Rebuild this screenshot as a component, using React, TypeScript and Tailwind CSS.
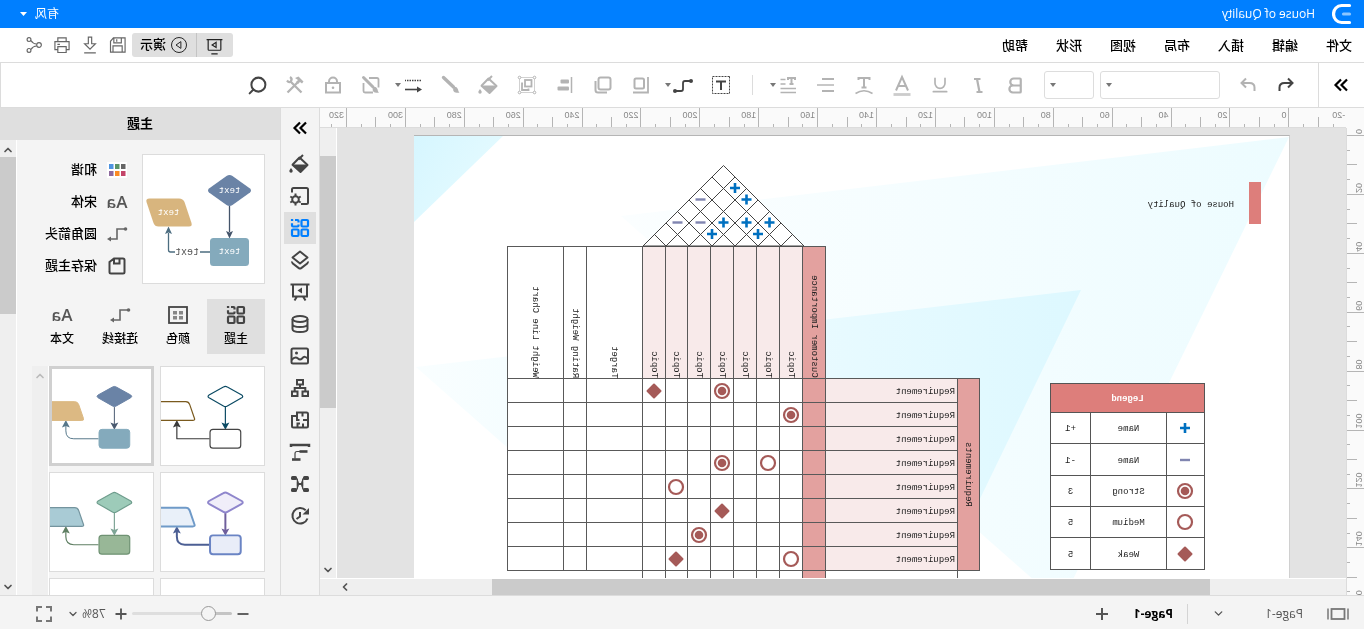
import React from "react";
import { Bold, ChevronDown, ChevronRight, ChevronUp, Search, Underline } from "lucide-react";

type IconProps = { children: React.ReactNode; w?: number; className?: string; size?: number };

function Icon({ children, w = 2, className = "", size = 24 }: IconProps) {
  return (
    <svg
      width={size}
      height={size}
      viewBox="0 0 24 24"
      fill="none"
      stroke="currentColor"
      strokeWidth={w}
      className={"shrink-0 " + className}
      aria-hidden="true"
    >
      {children}
    </svg>
  );
}

/* ---------- shared icons ---------- */

const Collapse = () => (
  <Icon w={2.2}>
    <path d="M6 6.500l5.500 5.500L6 17.500M12 6.500l5.500 5.500L12 17.500" />
  </Icon>
);

const Bucket = () => (
  <Icon w={2}>
    <path d="M12.500 5.500L4.500 13l7 7L19.500 12.800z" strokeLinejoin="round" />
    <path d="M4.500 12.500h15.500l-8.500 8z" fill="currentColor" stroke="none" />
    <path d="M9 3l4.500 4.500" />
    <path d="M21 16c1 1.300 1.700 2.200 1.700 3a1.700 1.700 0 0 1-3.400 0c0-.8.7-1.700 1.700-3z" fill="currentColor" stroke="none" />
  </Icon>
);

const ThemeGrid = () => (
  <Icon w={2.200}>
    <rect x="4" y="4" width="6.500" height="6.500" rx="1" />
    <path d="M13.500 8.500v1q0 1 1 1h4.500q1 0 1-1V7.200M13.500 6.500V5q0-1 1-1H17M18.800 4h2.300" />
    <rect x="4" y="13.500" width="6.500" height="6.500" rx="1" />
    <rect x="13.500" y="13.500" width="6.500" height="6.500" rx="1" />
  </Icon>
);

const FontSample = () => (
  <span aria-hidden="true" className="font-['Open_Sans'] text-[17px] font-semibold leading-6 text-[#555]">
    Aa
  </span>
);

const Elbow = () => (
  <Icon w={1.600} className="text-[#666]">
    <path d="M4 7h8v10h7" />
    <circle cx="3.500" cy="7" r="1.800" fill="currentColor" stroke="none" />
    <path d="M22 17l-4-2.500v5z" fill="currentColor" stroke="none" />
  </Icon>
);

/* ---------- title bar ---------- */

function TitleBar() {
  return (
    <header className="flex h-7 shrink-0 items-center bg-[#007fff] text-xs text-white">
      <svg width="20" height="22" viewBox="0 0 20 22" fill="none" className="ml-3" aria-hidden="true">
        <path d="M2.500 2.500h8a7.500 8 0 0 1 0 17h-8" stroke="#fff" strokeWidth="3.200" strokeLinecap="round" />
        <path d="M2.500 11h6" stroke="#8cc6ff" strokeWidth="3.200" strokeLinecap="round" />
      </svg>
      <h1 className="ml-[17px]">House of Quality</h1>
      <button className="ml-auto mr-5 flex items-center gap-2">
        有风
        <svg width="7" height="4" viewBox="0 0 7 4" aria-hidden="true">
          <path d="M0 0h7L3.500 4z" fill="#fff" />
        </svg>
      </button>
    </header>
  );
}

/* ---------- menu bar ---------- */

const menus = ["文件", "编辑", "插入", "布局", "视图", "形状", "帮助"];

function MenuBar() {
  return (
    <div className="flex h-[34px] shrink-0 items-center bg-white pl-3 pr-5 text-[13px] font-medium text-black">
      <nav className="flex gap-7 pt-[2px]">
        {menus.map((m) => (
          <button key={m}>{m}</button>
        ))}
      </nav>
      <div className="ml-auto flex items-center">
        <div className="flex h-6 rounded-[3px] bg-[#dfdfdf]">
          <button aria-label="放映" className="flex w-[37px] items-center justify-center border-r border-[#c4c4c4]">
            <Icon w={1.500} size={19} className="text-[#222]">
              <path d="M2 4.500h20M4 4.500v12.500q0 1 1 1h14q1 0 1-1V4.500M8 22.500h8" />
              <path d="M10 8v6.500l5-3.200z" />
            </Icon>
          </button>
          <button className="flex w-16 items-center justify-center gap-1">
            <Icon w={1.300} size={18} className="text-[#222]">
              <circle cx="12" cy="12" r="10" />
              <path d="M9.500 7.500v9l6.500-4.500z" />
            </Icon>
            演示
          </button>
        </div>
        <div className="flex text-[#666]">
          <button aria-label="保存" className="flex w-7 justify-center">
            <Icon w={1.400} size={20}>
              <path d="M3.500 3.500h14l3.500 4v13h-17.500zM8 3.500v6h9v-6M7 20.500v-7.500h11v7.500M13.500 5v3" />
            </Icon>
          </button>
          <button aria-label="下载" className="flex w-7 justify-center">
            <Icon w={1.400} size={20}>
              <path d="M10 2.500h4v8h4.500L12 17 5.500 10.500H10zM5 21.500h14" />
            </Icon>
          </button>
          <button aria-label="打印" className="flex w-7 justify-center">
            <Icon w={1.400} size={20}>
              <path d="M7 8V3.500h10V8M6.500 17.500H3.500V8h17v9.500h-3M7 14h10v7H7zM14.500 11.200h3" />
            </Icon>
          </button>
          <button aria-label="分享" className="flex w-7 justify-center">
            <Icon w={1.400} size={20}>
              <circle cx="6" cy="12" r="2.800" />
              <circle cx="18" cy="5.500" r="2.300" />
              <circle cx="18" cy="18.500" r="2.300" />
              <path d="M9 10.800q4 0 6.700-4.200M9 13.200q4 0 6.700 4.200" />
            </Icon>
          </button>
        </div>
      </div>
    </div>
  );
}

/* ---------- tool bar ---------- */

function Tool({ label, on, caret, children }: { label: string; on?: boolean; caret?: boolean; children: React.ReactNode }) {
  return (
    <button
      aria-label={label}
      className={
        "flex h-9 shrink-0 items-center pl-[7px] " +
        (caret ? "w-[42px] " : "w-[38px] ") +
        (on ? "text-[#444]" : "text-[#b3b3b3]")
      }
    >
      {children}
      {caret && (
        <svg width="6" height="4" viewBox="0 0 6 4" aria-hidden="true">
          <path d="M0 0h6L3 4z" fill="#777" />
        </svg>
      )}
    </button>
  );
}

function Combo({ label, wide }: { label: string; wide?: boolean }) {
  return (
    <div className={"relative shrink-0 " + (wide ? "w-[120px]" : "w-[50px]")}>
      <select aria-label={label} className="block h-7 w-full appearance-none rounded-[3px] border border-[#ddd] bg-white">
        <option></option>
      </select>
      <svg width="6" height="4" viewBox="0 0 6 4" className="pointer-events-none absolute right-[6px] top-3" aria-hidden="true">
        <path d="M0 0h6L3 4z" fill="#777" />
      </svg>
    </div>
  );
}

function ToolBar() {
  return (
    <div className="flex h-[46px] shrink-0 items-center border-y border-r border-[#dcdcdc] bg-white">
      <button aria-label="收起" className="flex h-full w-[46px] shrink-0 items-center justify-center border-r border-[#dcdcdc] text-black">
        <Collapse />
      </button>
      <div className="ml-[13px] mr-[9px] flex">
        <Tool label="撤销" on>
          <Icon>
            <path d="M10 5.500L5.500 10l4.500 4.500M6 10h7.500q5 0 5 4.500V18" />
          </Icon>
        </Tool>
        <Tool label="重做">
          <Icon>
            <path d="M14 5.500l4.500 4.500-4.500 4.500M18 10h-7.500q-5 0-5 4.500V18" />
          </Icon>
        </Tool>
      </div>
      <div className="mr-[9px] flex gap-[6px]">
        <Combo label="字体" wide />
        <Combo label="字号" />
      </div>
      <Tool label="加粗">
        <Bold size={21} strokeWidth={2.500} className="ml-[2px]" aria-hidden="true" />
      </Tool>
      <Tool label="斜体">
        <Icon w={2.200}>
          <path d="M9.500 6h6.500M7.500 19h6M13 6l-2.500 13" />
        </Icon>
      </Tool>
      <Tool label="下划线">
        <Underline size={20} className="ml-[2px]" aria-hidden="true" />
      </Tool>
      <Tool label="字体颜色">
        <Icon>
          <path d="M6 17.500L12 4l6 13.500M8 13h8" />
          <path d="M3.500 21.500h17" stroke="#ccc" strokeWidth="2.800" />
        </Icon>
      </Tool>
      <Tool label="弧形文字">
        <Icon>
          <path d="M6.500 7V5h11v2M12 5v9.500M9.500 14.500h5" />
          <path d="M3.500 20.500q8.500-5.500 17 0" strokeWidth="1.500" />
        </Icon>
      </Tool>
      <Tool label="对齐">
        <Icon>
          <path d="M4 6h12M4 18h12" />
          <path d="M4 12h17" stroke="#c8c8c8" />
        </Icon>
      </Tool>
      <Tool label="行距" caret>
        <Icon w={2}>
          <path d="M5 7V5h7v2M8.500 5v6M6.500 11h4" />
          <path d="M14.500 6.500H19.500M14.500 11H19.500M4 15.500h15.500M4 19.500h15.500" strokeWidth="1.600" />
        </Icon>
      </Tool>
      <div className="flex w-[25px] shrink-0 justify-center">
        <div className="h-5 w-px bg-[#dcdcdc]" />
      </div>
      <Tool label="文本框" on>
        <Icon>
          <rect x="3.500" y="3.500" width="17" height="17" strokeWidth="1" strokeDasharray="2 1" />
          <path d="M7 8.500h10M12 8.500v8.500" />
        </Icon>
      </Tool>
      <Tool label="连接线" on caret>
        <Icon w={1.800}>
          <path d="M4 8h6q2 0 2 2v6q0 2 2 2h6" />
          <circle cx="4" cy="8" r="2" fill="currentColor" stroke="none" />
          <circle cx="20" cy="18" r="2" fill="currentColor" stroke="none" />
        </Icon>
      </Tool>
      <Tool label="位置">
        <Icon>
          <rect x="9" y="5.500" width="9.500" height="10" rx="1.500" />
          <path d="M5 4v15.500h15" strokeWidth="1.800" />
        </Icon>
      </Tool>
      <Tool label="层次">
        <Icon>
          <rect x="4.500" y="4.500" width="12" height="12" rx="2" />
          <path d="M19.500 8v9q0 2.500-2.500 2.500H8" />
        </Icon>
      </Tool>
      <Tool label="排列">
        <Icon>
          <path d="M5.500 4v16" strokeWidth="1.500" />
          <rect x="8" y="6.500" width="8.500" height="4" rx="1" fill="currentColor" stroke="none" />
          <rect x="8" y="13.500" width="11.500" height="4" rx="1" fill="currentColor" stroke="none" />
        </Icon>
      </Tool>
      <Tool label="组合">
        <Icon w={1}>
          <path d="M6 4.500h12M6 19.500h12M4.500 6v12M19.500 6v12" strokeOpacity="0.6" />
          <circle cx="4.500" cy="4.500" r="1.300" fill="#fff" />
          <circle cx="19.500" cy="4.500" r="1.300" fill="#fff" />
          <circle cx="4.500" cy="19.500" r="1.300" fill="#fff" />
          <circle cx="19.500" cy="19.500" r="1.300" fill="#fff" />
          <rect x="7.500" y="7" width="6.500" height="6.500" strokeWidth="1.800" />
          <path d="M16 10.500h1v6.500h-6.500v-1.500" strokeWidth="1.800" />
        </Icon>
      </Tool>
      <Tool label="填充">
        <Bucket />
      </Tool>
      <Tool label="画笔">
        <Icon>
          <path d="M19.500 4.500L9.500 14" strokeWidth="3.400" strokeLinecap="round" />
          <path d="M9 14.500c1.500 1.500 1 4.500-1.500 5-1.500.3-3 .3-4 0 1.500-1 1-2.500 2-4 .8-1.300 2.500-1.800 3.500-1z" fill="currentColor" stroke="none" />
        </Icon>
      </Tool>
      <Tool label="线条样式" on caret>
        <Icon w={1.600}>
          <path d="M4 7.500h16" strokeDasharray="1.500 1" />
          <path d="M7 16.500h13" />
          <path d="M3 16.500l5-3v6z" fill="currentColor" stroke="none" />
        </Icon>
      </Tool>
      <Tool label="样式">
        <Icon w={1.800}>
          <path d="M14 5H6q-1.500 0-1.500 1.500v8M19.500 10v8q0 1.500-1.500 1.500h-8" />
          <path d="M19.500 4.500L10 14" strokeWidth="3" strokeLinecap="round" />
          <path d="M9.500 14.500c1.500 1.500 1 4.500-1.500 5-1.500.3-3 .3-4 0 1.500-1 1-2.500 2-4 .8-1.300 2.500-1.800 3.500-1z" fill="currentColor" stroke="none" />
        </Icon>
      </Tool>
      <Tool label="锁定">
        <Icon>
          <rect x="5" y="10" width="14" height="9.500" />
          <path d="M8 10V8.500a4 4 0 0 1 8 0v1.500" />
          <circle cx="12" cy="14.800" r="1.300" fill="currentColor" stroke="none" />
        </Icon>
      </Tool>
      <Tool label="工具">
        <Icon w={2.300}>
          <path d="M5.500 19.500L17 8M19.500 19.500l-10.500-10.500" />
          <path d="M3.500 8.500l5-5 3.500 1.500-3 2 2 2-2 2-2-2-2 1.500z" fill="currentColor" stroke="none" />
          <path d="M17 4q-2.500 1.500-1 4t4-.5" />
        </Icon>
      </Tool>
      <Tool label="搜索" on>
        <Search size={21} strokeWidth={2.300} className="ml-px" aria-hidden="true" />
      </Tool>
    </div>
  );
}

/* ---------- rulers ---------- */

const UNIT = 58.9;
const topTicks = Array.from({ length: 70 }, (_, i) => i - 4);
const sideTicks = Array.from({ length: 33 }, (_, i) => i);

function TopRuler() {
  return (
    <svg className="h-5 min-w-0 flex-1 border-b border-[#dcdcdc] bg-[#fafafa]" aria-hidden="true">
      {topTicks.map((t) => {
        const x = 56.6 + (t * UNIT) / 4;
        const top = t % 4 === 0 ? 0 : t % 2 === 0 ? 9 : 16;
        return (
          <g key={t}>
            <path d={`M${Math.round(x) + 0.5} ${top}V19`} stroke="#b5b5b5" />
            {t % 4 === 0 && (
              <text x={x + 3} y="10" fontSize="9" fill="#888" fontFamily="Liberation Sans">
                {t * 5}
              </text>
            )}
          </g>
        );
      })}
    </svg>
  );
}

function SideRuler() {
  return (
    <svg className="h-full w-[18px] shrink-0 border-r border-[#dcdcdc] bg-[#fafafa]" aria-hidden="true">
      {sideTicks.map((t) => {
        const y = 7 + (t * UNIT) / 4;
        const from = t % 4 === 0 ? 0 : t % 2 === 0 ? 7 : 14;
        return (
          <g key={t}>
            <path d={`M${from} ${Math.round(y) + 0.5}H17`} stroke="#b5b5b5" />
            {t % 4 === 0 && (
              <text transform={`translate(8 ${y - 1}) rotate(-90)`} fontSize="9" fill="#888" fontFamily="Liberation Sans">
                {t * 5}
              </text>
            )}
          </g>
        );
      })}
    </svg>
  );
}

/* ---------- diagram ---------- */

type Kind = "plus" | "minus" | "double" | "ring" | "diamond";

function Glyph({ kind }: { kind: Kind }) {
  if (kind === "plus") return <path d="M-5 0H5M0-5V5" stroke="#0070c0" strokeWidth="2.600" />;
  if (kind === "minus") return <path d="M-5 0H5" stroke="#8085b0" strokeWidth="2.400" />;
  if (kind === "diamond")
    return <path d="M0-6.500L6.500 0 0 6.500-6.500 0z" fill="#a55a58" stroke="#a55a58" strokeWidth="2" strokeLinejoin="round" />;
  return (
    <g>
      <circle r="7" fill="#fff" stroke="#a55a58" strokeWidth="2.200" />
      {kind === "double" && <circle r="4.300" fill="#a55a58" />}
    </g>
  );
}

function Mark({ kind }: { kind: Kind }) {
  return (
    <svg width="18" height="18" viewBox="-9 -9 18 18" className="mx-auto block" aria-hidden="true">
      <Glyph kind={kind} />
    </svg>
  );
}

const roofMarks: [number, number, Kind][] = [
  [69, 23, "plus"],
  [57.5, 34.5, "plus"],
  [34.5, 57.5, "plus"],
  [46, 69, "plus"],
  [57.5, 57.5, "plus"],
  [80.5, 57.5, "plus"],
  [92, 69, "plus"],
  [103.5, 34.5, "minus"],
  [103.5, 57.5, "minus"],
  [126.5, 57.5, "minus"],
];

function Roof() {
  return (
    <svg width="163" height="83" viewBox="-1 -1 163 83" className="absolute left-[484px] top-7" aria-hidden="true">
      <path d="M0 81L80.500.5 161 81z" fill="#fff" stroke="#444" />
      {[1, 2, 3, 4, 5, 6].map((k) => (
        <path
          key={k}
          d={`M${11.5 * k} ${81 - 11.5 * k}L${23 * k} 81L${(23 * k + 161) / 2} ${81 - (161 - 23 * k) / 2}`}
          fill="none"
          stroke="#444"
        />
      ))}
      {roofMarks.map(([x, y, kind], i) => (
        <g key={i} transform={`translate(${x} ${y})`}>
          <Glyph kind={kind} />
        </g>
      ))}
    </svg>
  );
}

const matrix: Record<number, Kind>[] = [
  { 3: "double", 6: "diamond" },
  { 0: "double" },
  {},
  { 1: "ring", 3: "double" },
  { 5: "ring" },
  { 3: "diamond" },
  { 4: "double" },
  { 0: "ring", 5: "diamond" },
];
const topics = [0, 1, 2, 3, 4, 5, 6];

function Upright({ children }: { children: string }) {
  return (
    <span className="inline-block rotate-180 whitespace-nowrap align-bottom leading-3 [writing-mode:vertical-rl]">
      {children}
    </span>
  );
}

function Matrix() {
  return (
    <table className="absolute left-[309px] top-[110px] w-[472px] table-fixed border-collapse text-[9px] leading-3 text-[#222] [&_td]:p-0 [&_th]:p-0 [&_th]:font-normal">
      <colgroup>
        <col className="w-[22px]" />
        <col className="w-[132px]" />
        {[...topics, 7].map((c) => (
          <col key={c} className={c === 6 ? "w-[22px]" : "w-[23px]"} />
        ))}
        <col className="w-[56px]" />
        <col className="w-[23px]" />
        <col className="w-[56px]" />
      </colgroup>
      <thead>
        <tr className="h-[132px] align-bottom">
          <td colSpan={2} />
          <th className="border border-[#595959] bg-[#e3a19f]">
            <Upright>Customer Importance</Upright>
          </th>
          {topics.map((c) => (
            <th key={c} className="border border-[#595959] bg-[#f8eaea]">
              <Upright>Topic</Upright>
            </th>
          ))}
          {["Target", "Rating Weight", "Weight Line Chart"].map((t) => (
            <th key={t} className="border border-[#595959] bg-white">
              <Upright>{t}</Upright>
            </th>
          ))}
        </tr>
      </thead>
      <tbody>
        {matrix.map((row, r) => (
          <tr key={r} className="h-6">
            {r === 0 && (
              <th rowSpan={8} className="border border-[#595959] bg-[#e3a19f] align-middle">
                <Upright>Requirements</Upright>
              </th>
            )}
            <th className="border border-[#595959] bg-[#f8eaea] text-left">
              <span className="block pl-[2px] pt-[2px]">Requirement</span>
            </th>
            <td className="border border-[#595959] bg-[#e3a19f]" />
            {topics.map((c) => (
              <td key={c} className="border border-[#595959] bg-white">
                {row[c] && <Mark kind={row[c]} />}
              </td>
            ))}
            <td className="border border-[#595959] bg-white" />
            <td className="border border-[#595959] bg-white" />
            <td className="border border-[#595959] bg-white" />
          </tr>
        ))}
        <tr className="h-6">
          <td />
          <td className="border-x border-[#595959] bg-white" />
          <td className="border-x border-[#595959] bg-[#e3a19f]" />
          {topics.map((c) => (
            <td key={c} className="border-x border-[#595959] bg-white" />
          ))}
          <td />
          <td />
          <td />
        </tr>
      </tbody>
    </table>
  );
}

const legend: [Kind, string, string][] = [
  ["plus", "Name", "+1"],
  ["minus", "Name", "-1"],
  ["double", "Strong", "3"],
  ["ring", "Medium", "5"],
  ["diamond", "Weak", "5"],
];

function Legend() {
  return (
    <table className="absolute left-[84px] top-[247px] w-[154px] table-fixed border-collapse bg-white text-center text-[9px] leading-3 text-[#222] [&_td]:border [&_td]:border-[#555] [&_td]:p-0">
      <colgroup>
        <col className="w-[38px]" />
        <col className="w-[76px]" />
        <col className="w-[40px]" />
      </colgroup>
      <thead>
        <tr className="h-[29px]">
          <th colSpan={3} className="border border-[#555] bg-[#dd7e7b] p-0 font-bold text-white">
            <span className="block pt-[2px]">Legend</span>
          </th>
        </tr>
      </thead>
      <tbody>
        {legend.map(([kind, name, value], i) => (
          <tr key={i} className={i % 3 === 1 ? "h-8" : "h-[31px]"}>
            <td>
              <Mark kind={kind} />
            </td>
            <td>
              <span className="block pt-[2px]">{name}</span>
            </td>
            <td>
              <span className="block pt-[2px]">{value}</span>
            </td>
          </tr>
        ))}
      </tbody>
    </table>
  );
}

function Backdrop() {
  return (
    <svg width="875" height="620" viewBox="0 0 875 620" className="absolute left-0 top-0" aria-hidden="true">
      <defs>
        <linearGradient id="wide" x1="0" y1="0" x2="1" y2="0">
          <stop offset="0" stopColor="#edfcff" />
          <stop offset="1" stopColor="#fbfeff" />
        </linearGradient>
        <linearGradient id="deep" x1="0" y1="0" x2="1" y2="0">
          <stop offset="0" stopColor="#ddf8ff" />
          <stop offset="1" stopColor="#f9feff" />
        </linearGradient>
        <linearGradient id="corner" x1="1" y1="0" x2="0" y2="0.600">
          <stop offset="0" stopColor="#d6f6ff" />
          <stop offset="1" stopColor="#e6fbff" />
        </linearGradient>
      </defs>
      <path d="M0 1L668 80 228 468z" fill="url(#wide)" />
      <path d="M208 154l665 77L433 619z" fill="url(#deep)" />
      <path d="M875 0h-89l89 86z" fill="url(#corner)" />
    </svg>
  );
}

function Drawing() {
  return (
    <div className="relative ml-14 mt-[7px] h-[620px] w-[876px] shrink-0 overflow-hidden border-l border-t border-l-[#d0d0d0] border-t-[#b5b5b5] bg-white font-['Liberation_Mono',monospace]">
      <Backdrop />
      <div className="absolute left-7 top-[46px] h-[42px] w-3 bg-[#dd7e7b]" />
      <p className="absolute left-[55px] top-[63px] text-[9px] leading-3 text-[#222]">House of Quality</p>
      <Legend />
      <Matrix />
      <Roof />
    </div>
  );
}

function Editor() {
  return (
    <main className="flex min-w-0 flex-1 flex-col">
      <div className="flex bg-[#fafafa]">
        <div className="w-[18px] shrink-0" />
        <TopRuler />
      </div>
      <div className="flex min-h-0 flex-1">
        <SideRuler />
        <div className="flex min-w-0 flex-1 flex-col">
          <div className="flex min-h-0 flex-1">
            <div className="min-w-0 flex-1 overflow-hidden bg-[#e3e3e3]">
              <Drawing />
            </div>
            <div className="flex w-[17px] shrink-0 flex-col items-center border-l border-white bg-[#efefef]">
              <div className="mt-7 h-[252px] w-full bg-[#cbcbcb]" />
              <ChevronDown size={12} strokeWidth={3.500} className="mt-auto mb-[2px] text-[#555]" aria-hidden="true" />
            </div>
          </div>
          <div className="flex h-[17px] shrink-0 items-center border-t border-white bg-[#efefef]">
            <div className="ml-[136px] h-full w-[718px] bg-[#cbcbcb]" />
            <ChevronRight size={12} strokeWidth={3.500} className="ml-auto mr-[19px] text-[#555]" aria-hidden="true" />
          </div>
        </div>
      </div>
    </main>
  );
}

/* ---------- icon strip ---------- */

const stripIcons: [string, React.ReactNode][] = [
  ["填充", <Bucket key="a" />],
  [
    "页面设置",
    <Icon key="b" w={2}>
      <path d="M11 20H5.500Q4 20 4 18.500V5.500Q4 4 5.500 4h13Q20 4 20 5.500V8.500" />
      <circle cx="16.500" cy="15.500" r="3.300" />
      <path d="M16.500 9.500v3M16.500 18.500v3M11.300 12.500l2.600 1.500M19.100 17l2.600 1.500M11.300 18.500l2.600-1.500M19.100 14l2.600-1.500" />
    </Icon>,
  ],
  ["主题", <ThemeGrid key="c" />],
  [
    "图层",
    <Icon key="d" w={2}>
      <path d="M12 3.500l7.500 6L12 15.500 4.500 9.500z" strokeLinejoin="round" />
      <path d="M4.300 13.500q-.5 1 .5 2l6 4.600q1.200.9 2.400 0l6-4.600q1-1 .5-2" />
    </Icon>,
  ],
  [
    "幻灯片",
    <Icon key="e" w={2}>
      <path d="M2.500 4.500h19M5 4.500V16.500h14V4.500M9 16.500l-2.500 4M15 16.500l2.500 4" />
      <path d="M10 7.500v6l4.500-3z" fill="currentColor" stroke="none" />
    </Icon>,
  ],
  [
    "数据",
    <Icon key="f" w={2}>
      <ellipse cx="12" cy="7" rx="7.500" ry="3" />
      <path d="M4.500 7v10c0 4 15 4 15 0V7M4.500 12c0 4 15 4 15 0" />
    </Icon>,
  ],
  [
    "图片",
    <Icon key="g" w={2}>
      <rect x="4" y="4.500" width="16.500" height="15" rx="1.500" />
      <path d="M4 15q3-4 6-.5 2 2 4 0 3-2.500 6.500 1.500" />
      <circle cx="15.500" cy="9" r="1.500" fill="currentColor" stroke="none" />
    </Icon>,
  ],
  [
    "组织结构",
    <Icon key="h" w={2}>
      <rect x="9" y="4" width="6" height="4.500" />
      <rect x="4" y="15.500" width="5.500" height="4.500" />
      <rect x="14.500" y="15.500" width="5.500" height="4.500" />
      <path d="M12 8.500V12M6.700 15.500V12h10.600v3.500" />
    </Icon>,
  ],
  [
    "平面图",
    <Icon key="i" w={2}>
      <path d="M16 4.500H5.500Q4 4.500 4 6v12q0 1.500 1.500 1.500H18.500q1.500 0 1.500-1.500V8H15V4.500M15 7v5h-2.500M9.500 4.500V8.500M4 12H9M14.500 19.500V15.500h-2.500M9 15.500v4" />
    </Icon>,
  ],
  [
    "格式",
    <Icon key="j" w={1.800}>
      <path d="M3 7V5H21V7" strokeWidth="2.500" />
      <path d="M4.500 11.500H12.500" strokeWidth="2.600" />
      <path d="M12 11.500h3q2 0 2 2v5" strokeWidth="1.200" />
      <path d="M11.500 19.500H20" strokeWidth="2.600" />
    </Icon>,
  ],
  [
    "关系",
    <Icon key="k" w={1.300}>
      <path d="M7 6q2.500 0 2.500 3v6q0 3-2.500 3M17 6q-2.500 0-2.500 3v6q0 3 2.500 3" />
      <path d="M9.800 9.500v5M14.200 9.500v5M9.800 12h4.400" strokeWidth="2" />
      <rect x="3" y="4" width="6" height="4" rx="1.500" fill="currentColor" stroke="none" />
      <rect x="15" y="4" width="6" height="4" rx="1.500" fill="currentColor" stroke="none" />
      <rect x="3" y="16" width="6" height="4" rx="1.500" fill="currentColor" stroke="none" />
      <rect x="15" y="16" width="6" height="4" rx="1.500" fill="currentColor" stroke="none" />
    </Icon>,
  ],
  [
    "历史",
    <Icon key="l" w={2}>
      <path d="M4.500 14.500a7.800 7.800 0 1 0 1.800-8.300" />
      <path d="M3 4v6.500h6.500z" fill="currentColor" stroke="none" />
      <path d="M12 8v4.500l3.500 2.500" />
    </Icon>,
  ],
];

function IconStrip() {
  return (
    <aside className="flex w-10 shrink-0 flex-col items-center border-x border-[#dcdcdc] bg-[#f4f4f4] text-[#444]">
      <button aria-label="收起面板" className="flex h-10 w-full shrink-0 items-center justify-center text-black">
        <Collapse />
      </button>
      {stripIcons.map(([name, icon]) => (
        <button
          key={name}
          aria-label={name}
          className={
            "flex h-8 w-8 shrink-0 items-center justify-center " + (name === "主题" ? "bg-[#dfdfdf] text-[#007fff]" : "")
          }
        >
          {icon}
        </button>
      ))}
    </aside>
  );
}

/* ---------- theme panel ---------- */

type Theme = {
  diamond: [string, string];
  box: [string, string];
  skew: [string, string];
  down: string;
  up: string;
  stroke: number;
  round: boolean;
};

const themes: Theme[] = [
  { diamond: ["#fff", "#0b4a63"], box: ["#fff", "#444"], skew: ["#fff", "#7a5a1e"], down: "#0b4a63", up: "#3a3a3a", stroke: 1.2, round: false },
  { diamond: ["#6a83a6", "#6a83a6"], box: ["#84aabc", "#84aabc"], skew: ["#dcb983", "#dcb983"], down: "#4a5a70", up: "#56778a", stroke: 1, round: true },
  { diamond: ["#f0eef9", "#8f86cc"], box: ["#e9edf8", "#6a84c4"], skew: ["#e9f0f9", "#6f9ac8"], down: "#6f5f9c", up: "#4c5f94", stroke: 2, round: true },
  { diamond: ["#9dcbb9", "#6f9d8d"], box: ["#98b797", "#6f9273"], skew: ["#a9cbd5", "#74949e"], down: "#7ea596", up: "#5f7f63", stroke: 1.2, round: true },
];

function ThemeArt({ t }: { t: Theme }) {
  return (
    <svg viewBox="0 0 104 98" className="block h-[98px] w-[104px]" strokeLinejoin="round" aria-hidden="true">
      <path d="M39 40v18" stroke={t.down} strokeWidth={t.stroke} />
      <path d="M39 63l-4-7.500 4 1.500 4-1.500z" fill={t.down} />
      <path
        d={t.round ? "M55 72h25q8 0 8-8v-5" : "M55 72h33V59"}
        fill="none"
        stroke={t.up}
        strokeWidth={t.stroke}
      />
      <path d="M88 53l-4 7.500 4-1.500 4 1.500z" fill={t.up} />
      <path
        d="M37 19.800q2-1.300 4 0l14.500 8q2 1.400 0 2.800L41 38.800q-2 1.300-4 0L22.500 30.600q-2-1.400 0-2.800z"
        fill={t.diamond[0]}
        stroke={t.diamond[1]}
        strokeWidth={t.stroke}
      />
      <rect x="23.500" y="62.500" width="31" height="19" rx="3" fill={t.box[0]} stroke={t.box[1]} strokeWidth={t.stroke} />
      <path
        d="M79 34.500h34l-6 19H72q-2.500 0-1.800-2l4.800-14q1-3 4-3z"
        fill={t.skew[0]}
        stroke={t.skew[1]}
        strokeWidth={t.stroke}
      />
    </svg>
  );
}

function Preview() {
  return (
    <svg width="121" height="128" viewBox="1 1 121 128" fontFamily="Liberation Mono" textAnchor="middle" aria-hidden="true">
      <path d="M35.500 52v26" stroke="#44546a" strokeWidth="1.300" />
      <path d="M35.500 84.500l-3.500-7.500 3.500 1.500 3.500-1.500z" fill="#44546a" />
      <path d="M55 98h10M90 98h4.500q2 0 2-2V79" fill="none" stroke="#4c6d80" strokeWidth="1.300" />
      <path d="M96.500 72.500l-3.500 7.500 3.500-1.500 3.500 1.500z" fill="#4c6d80" />
      <path d="M32.500 22q3-2 6 0l17.500 12.500q2 2 0 4L38.500 51q-3 2-6 0L15 38.500q-2-2 0-4z" fill="#6a83a6" />
      <rect x="16" y="84" width="39" height="28" rx="3.500" fill="#84aabc" />
      <path d="M86 44.500h29.500q4 0 3 3.500l-7 21q-1.300 3.500-5 3.500H76q-3.500 0-2.500-3.500l7-21q1.500-3.500 5.500-3.500z" fill="#d8b57e" transform="rotate(0)" />
      <text x="35.500" y="39" fontSize="9" fill="#fff">text</text>
      <text x="35.500" y="100" fontSize="9" fill="#fff">text</text>
      <text x="96.500" y="61" fontSize="9" fill="#fff">text</text>
      <text x="78" y="101" fontSize="10" fill="#555">text</text>
    </svg>
  );
}

function Palette() {
  const c = ["#666", "#5a9367", "#4f94e0", "#c44569", "#fb8b24", "#8e6a9e"];
  return (
    <svg width="20" height="16" viewBox="0 0 20 16" aria-hidden="true">
      <rect width="20" height="16" fill="#fff" />
      {c.map((fill, i) => (
        <rect key={i} x={1.5 + (i % 3) * 6} y={i < 3 ? 2 : 9} width="4.500" height="5" fill={fill} />
      ))}
    </svg>
  );
}

const SaveTheme = () => (
  <Icon w={2}>
    <path d="M5.500 4.500h9.500l4.500 3.500v10q0 1.500-1.500 1.500H6q-1.500 0-1.500-1.500V6q0-1.500 1.500-1.500zM9.500 4.500v5h5.500v-5" />
  </Icon>
);

const settings: [string, React.ReactNode][] = [
  ["和谐", <Palette key="p" />],
  ["宋体", <FontSample key="f" />],
  ["圆角箭头", <Elbow key="e" />],
  ["保存主题", <SaveTheme key="s" />],
];

const tabs: [string, React.ReactNode][] = [
  ["主题", <ThemeGrid key="t" />],
  [
    "颜色",
    <Icon key="c" w={1.800}>
      <rect x="3" y="4" width="18" height="16" />
      <path d="M7 8h4v3.500H7zM13 8h4v3.500h-4zM7 13h4v3.500H7zM13 13h4v3.500h-4z" fill="#888" stroke="none" />
    </Icon>,
  ],
  ["连接线", <Elbow key="e" />],
  ["文本", <FontSample key="f" />],
];

function ThemePanel() {
  return (
    <aside className="flex w-[280px] shrink-0 flex-col bg-[#f4f4f4]">
      <h2 className="flex h-8 shrink-0 items-center justify-center bg-[#dfdfdf] text-[13px] font-bold text-black">主题</h2>
      <div className="flex min-h-0 flex-1">
        <div className="flex min-w-0 flex-1 flex-col overflow-hidden pl-[15px] pt-[14px]">
          <div className="flex">
            <div className="h-[130px] w-[123px] shrink-0 border border-[#dcdcdc] bg-white">
              <Preview />
            </div>
            <div className="ml-[13px] flex flex-col text-[13px] font-medium text-black">
              {settings.map(([name, icon]) => (
                <button key={name} className="flex h-8 items-center gap-2 whitespace-nowrap">
                  <span className="flex w-6 justify-center text-[#444]">{icon}</span>
                  {name}
                </button>
              ))}
            </div>
          </div>
          <div className="mt-[15px] flex text-xs font-medium text-black">
            {tabs.map(([name, icon], i) => (
              <button
                key={name}
                className={"flex h-[55px] w-[58px] shrink-0 flex-col items-center pt-1 " + (i === 0 ? "bg-[#dfdfdf]" : "")}
              >
                <span className="flex h-6 items-center text-[#444]">{icon}</span>
                <span className="mt-[2px] leading-5">{name}</span>
              </button>
            ))}
          </div>
          <div className="mt-3 flex min-h-0 flex-1 overflow-hidden">
            <div className="grid shrink-0 grid-cols-[105px_105px] content-start gap-[6px]">
              {themes.map((t, i) => (
                <button
                  key={i}
                  aria-label={"主题 " + (i + 1)}
                  className={
                    "flex h-[100px] overflow-hidden border bg-white " +
                    (i === 1 ? "border-[#d0d0d0] outline-2 -outline-offset-3 outline-[#d0d0d0]" : "border-[#dcdcdc]")
                  }
                >
                  <ThemeArt t={t} />
                </button>
              ))}
              <button aria-label="主题 5" className="h-[100px] border border-[#dcdcdc] bg-white" />
              <button aria-label="主题 6" className="h-[100px] border border-[#dcdcdc] bg-white" />
            </div>
            <div className="flex w-[17px] shrink-0 justify-center border-l border-white bg-[#efefef] pt-1 text-[#bbb]">
              <ChevronUp size={12} strokeWidth={3.500} aria-hidden="true" />
            </div>
          </div>
        </div>
        <div className="flex w-[17px] shrink-0 flex-col items-center border-l border-white bg-[#efefef] text-[#555]">
          <ChevronUp size={12} strokeWidth={3.500} className="mt-1" aria-hidden="true" />
          <div className="mt-px h-[157px] w-full bg-[#cbcbcb]" />
          <ChevronDown size={12} strokeWidth={3.500} className="mb-[2px] mt-auto" aria-hidden="true" />
        </div>
      </div>
    </aside>
  );
}

/* ---------- status bar ---------- */

function StatusBar() {
  return (
    <footer className="flex h-[34px] shrink-0 items-center border-t border-[#dcdcdc] bg-[#f4f4f4] pl-[14px] pr-8 pt-[2px] text-xs text-[#555]">
      <button aria-label="页面视图" className="text-[#777]">
        <Icon w={1.800}>
          <path d="M2 6.500v11M22 6.500v11" strokeWidth="1.500" />
          <rect x="5.500" y="7" width="13" height="10" />
        </Icon>
      </button>
      <button className="ml-[23px] flex items-center">
        Page-1
        <ChevronDown size={13} strokeWidth={2.500} className="ml-10" aria-hidden="true" />
      </button>
      <div className="ml-6 h-5 w-px bg-[#d4d4d4]" />
      <button className="ml-[14px] font-bold text-black">Page-1</button>
      <button aria-label="新建页面" className="ml-5 text-[#555]">
        <Icon w={2}>
          <path d="M12 6v12M6 12h12" />
        </Icon>
      </button>
      <div className="ml-auto flex items-center">
        <button aria-label="缩小">
          <Icon w={2} size={22}>
            <path d="M6 12h12" />
          </Icon>
        </button>
        <input
          type="range"
          aria-label="缩放"
          min="0"
          max="100"
          defaultValue="18"
          className="h-[3px] w-[100px] appearance-none rounded-full bg-[linear-gradient(to_right,#c4c4c4_22%,#dedede_22%)] [&::-webkit-slider-thumb]:h-[15px] [&::-webkit-slider-thumb]:w-[15px] [&::-webkit-slider-thumb]:appearance-none [&::-webkit-slider-thumb]:rounded-full [&::-webkit-slider-thumb]:border [&::-webkit-slider-thumb]:border-[#999] [&::-webkit-slider-thumb]:bg-[#f4f4f4]"
        />
        <button aria-label="放大">
          <Icon w={2} size={22}>
            <path d="M12 6v12M6 12h12" />
          </Icon>
        </button>
        <button className="ml-1 flex items-center gap-[3px]">
          78%
          <ChevronDown size={12} strokeWidth={2.500} aria-hidden="true" />
        </button>
        <button aria-label="全屏" className="ml-[11px] text-[#777]">
          <Icon w={2}>
            <path d="M5 9.500V5h5M14 5h5v4.500M19 14.500V19h-5M10 19H5v-4.500" />
          </Icon>
        </button>
      </div>
    </footer>
  );
}

export default function App() {
  return (
    <div className="flex h-screen -scale-x-100 flex-col overflow-hidden font-['Open_Sans','Noto_Sans_CJK_SC',sans-serif]">
      <TitleBar />
      <MenuBar />
      <ToolBar />
      <div className="flex min-h-0 flex-1">
        <Editor />
        <IconStrip />
        <ThemePanel />
      </div>
      <StatusBar />
    </div>
  );
}
